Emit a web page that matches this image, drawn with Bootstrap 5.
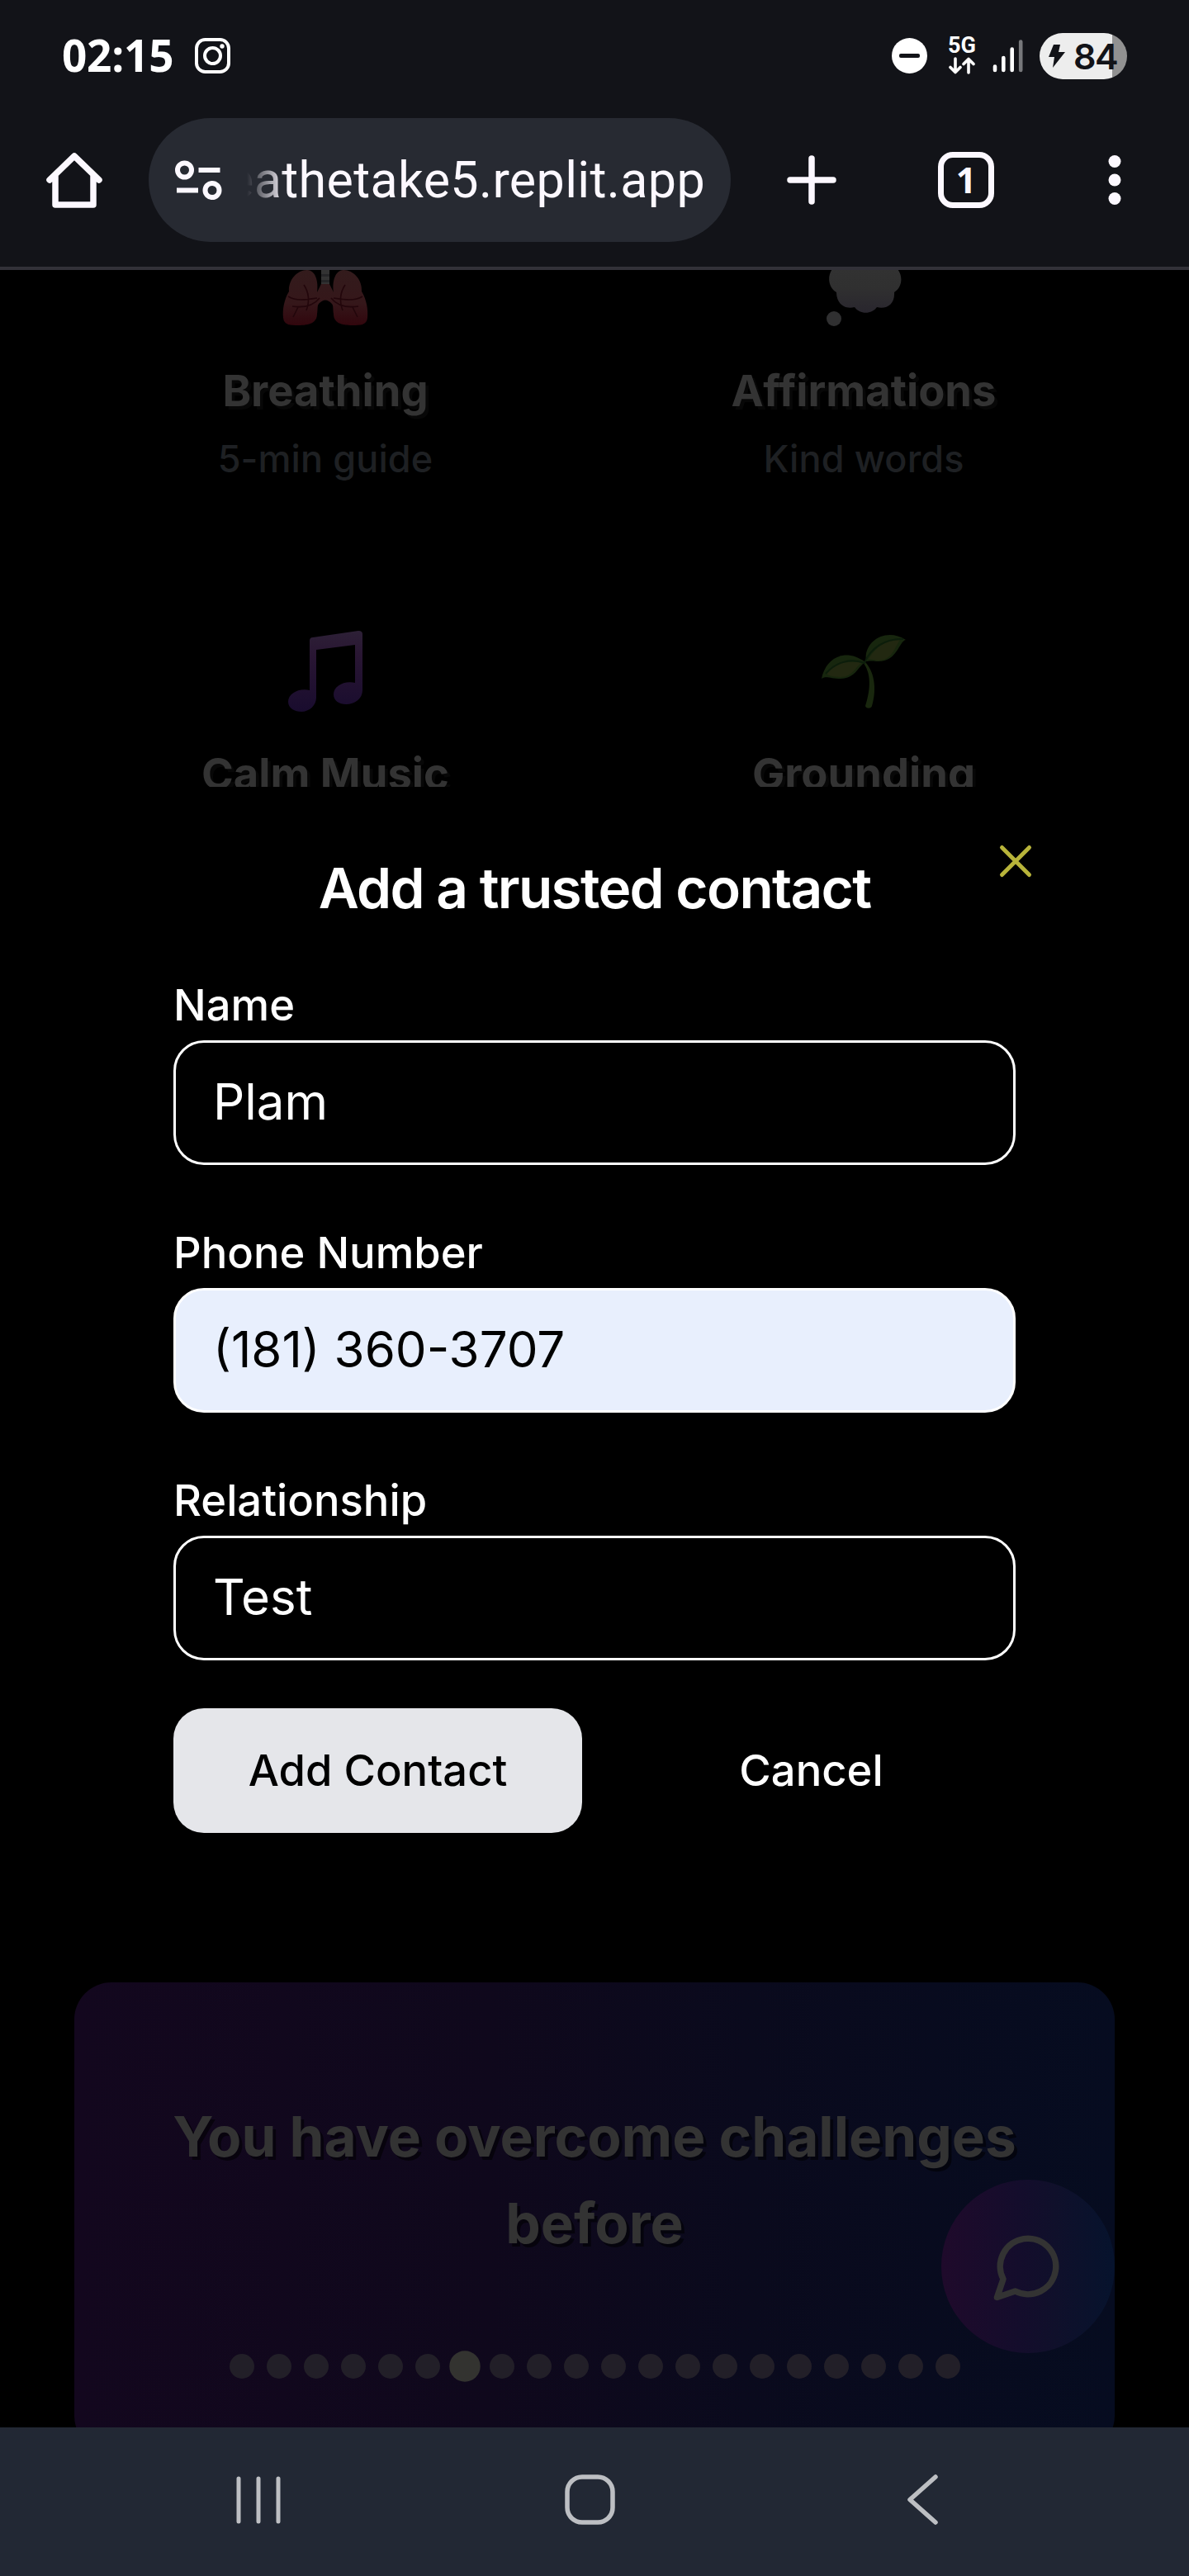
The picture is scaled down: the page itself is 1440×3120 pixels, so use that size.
<!DOCTYPE html>
<html lang="en">
<head>
<meta charset="utf-8">
<meta name="viewport" content="width=device-width, initial-scale=1">
<title>Add a trusted contact</title>
<link href="https://cdn.jsdelivr.net/npm/bootstrap@5.3.0/dist/css/bootstrap.min.css" rel="stylesheet">
<style>
  body { background: #000; color: #fff; font-family: Inter, "Liberation Sans", sans-serif; width: 1440px; height: 3120px; overflow: hidden; }
  svg { display: block; flex: none; }

  .status-bar { height: 135px; padding: 0 75px; background: #121318; font-family: "Open Sans", "Noto Sans", sans-serif; }
  .clock { font-size: 53px; font-weight: 700; line-height: 1; letter-spacing: -.2px; width: 161px; margin-top: -2px; }
  .net-type { width: 34px; margin-left: 25px; font: 700 27px/19px Roboto, sans-serif; }
  .signal { margin-left: 20px; }
  .batt { width: 106px; height: 56px; margin-left: 19px; padding-left: 11px; gap: 10px; border-radius: 28px; background: linear-gradient(90deg, #ededed 0 88px, #919191 88px); color: #121318; font: 600 43px/56px Inter, sans-serif; letter-spacing: -1.5px; }

  .toolbar { height: 192px; padding: 8px 0 0 56px; background: #121318; border-bottom: 4px solid #323138; }
  .home-key { margin-top: 41px; }
  .omnibox { width: 705px; height: 150px; margin-left: 56px; padding-left: 32px; border-radius: 75px; background: #272a32; }
  .omni-text { width: 555px; margin-left: 30px; overflow: hidden; color: #fcf8ff; font: 400 61px/90px Roboto, sans-serif; letter-spacing: .35px;
    -webkit-mask-image: linear-gradient(90deg, transparent 0, #000 48px); mask-image: linear-gradient(90deg, transparent 0, #000 48px); }
  .omni-text span { white-space: nowrap; }
  .plus-key { margin: 45px 0 0 68px; }
  .tab-count { width: 68px; height: 68px; margin: 41px 0 0 123px; border: 7.5px solid #fcf8ff; border-radius: 18px; color: #fcf8ff; font: 700 43px/53px "Open Sans", sans-serif; }
  .more-key { margin: 45px 0 0 138px; }

  .backdrop-tools { height: 626px; padding: 0 68px; overflow: hidden; }
  .tool-tile { height: 464px; }
  .tool-art { height: 72px; }
  .tool-name { margin-top: 37px; color: #333; font-size: 52.5px; font-weight: 700; line-height: 75px; text-shadow: 3.75px 3.75px 0 #070707; }
  .tool-hint { margin-top: 15px; color: #1e2023; font-size: 45px; font-weight: 500; line-height: 60px; letter-spacing: .1px; }

  .dialog-pane { height: 1448px; padding: 75px 210px 0; background: #000; }
  .dialog-title { margin: -1px 0 70px; padding-top: 15px; font-size: 67.5px; font-weight: 600; line-height: 68px; letter-spacing: -1.69px; }
  .close-x { top: 60px; right: 180px; }
  .field-row { margin-bottom: 69px; }
  .field-row-last { margin-bottom: 58px; }
  .field-label { font-size: 52.5px; font-weight: 500; line-height: 75px; display: block; margin: 0 0 5px; }
  .form-control.field-box { height: 151px; padding: 0 45px 3px; border: 3px solid #fff; border-radius: 37px; background: #000; color: #fff; font-size: 60px; line-height: 90px; }
  .form-control.field-filled { background: #e8effd; color: #000; }
  .dialog-actions { gap: 30px; }
  .btn.dialog-btn { height: 151px; border: 0; border-radius: 37px; font-size: 52.5px; font-weight: 500; color: #fff; }
  .btn.dialog-main { background: #e5e6ea; color: #000; }

  .lower { height: 539px; padding: 0 90px; overflow: hidden; }
  .quote-card { height: 570px; padding-top: 134px; border-radius: 45px; background: linear-gradient(90deg, #13071e 0%, #0f081c 40%, #0a0a1d 65%, #060c20 100%); }
  .quote-text { color: #333; font-size: 67.5px; font-weight: 700; line-height: 105px; text-shadow: 3.75px 3.75px 0 rgba(0,0,0,.55); }
  .pips { gap: 15px; margin: 106px 0 0; padding-left: 188px; }
  .pip { width: 30px; height: 30px; border-radius: 50%; background: #221f28; }
  .pip-on { background: #333330; transform: scale(1.25); }
  .fab { top: 239px; right: 90px; width: 210px; height: 210px; border-radius: 50%; background: linear-gradient(90deg, #1f0a2b, #140d2c 45%, #10102b 65%, #06132d); }

  .nav-keys { height: 180px; padding: 0 0 5px 285px; background: #222834; }
  .key-home { margin-left: 343px; }
  .key-back { margin-left: 352px; }
</style>
</head>
<body>
<header>
  <div class="status-bar d-flex align-items-center">
    <div class="clock">02:15</div>
    <svg width="43" height="43" viewBox="0 0 43 43" fill="none" stroke="#fff" stroke-width="4"><rect x="2" y="2" width="39" height="39" rx="10.5"/><circle cx="21.500" cy="21.500" r="9.500"/><circle cx="33" cy="10" r="2.700" fill="#fff" stroke="none"/></svg>
    <div class="ms-auto d-flex align-items-center">
      <svg width="43" height="43" viewBox="0 0 43 43"><circle cx="21.500" cy="21.500" r="21.500" fill="#fff"/><rect x="9" y="19" width="25" height="5" rx="2" fill="#121318"/></svg>
      <div class="net-type text-center">
        5G
        <svg width="34" height="21" viewBox="0 0 34 21" fill="none" stroke="#fff" stroke-width="3.600" stroke-linecap="round" stroke-linejoin="round" class="mt-1"><path d="M9 2v16M3 12.500l6 6 6-6M25 19V3M19 8.500l6-6 6 6"/></svg>
      </div>
      <svg class="signal" width="38" height="41" viewBox="0 0 38 41" stroke-width="4.600" stroke-linecap="round" fill="none"><path stroke="#fff" d="M3 33.500v4.500M13.300 23v15M23.700 12.500v25.500"/><path stroke="#77787b" d="M34.200 3.500v34.500"/></svg>
      <div class="batt d-flex align-items-center">
        <svg width="20" height="28" viewBox="0 0 20 28"><path fill="#121318" d="M6 0h8l-2 9h8L5 28l2-13H0z"/></svg>
        <span>84</span>
      </div>
    </div>
  </div>
  <div class="toolbar d-flex">
    <svg class="home-key" width="68" height="68" viewBox="0 0 68 68" fill="none" stroke="#fcf8ff" stroke-width="7.500" stroke-linecap="round" stroke-linejoin="round"><path d="M4 34 34 5l30 29M11 28v36h46V28"/></svg>
    <div class="omnibox d-flex align-items-center">
      <svg width="57" height="49" viewBox="0 0 57 49" fill="none" stroke="#fcf8ff" stroke-width="6"><circle cx="11.500" cy="12" r="8.500"/><path d="M28.500 12h26M2 36.500h26"/><circle cx="45" cy="36.500" r="8.500"/></svg>
      <div class="omni-text d-flex justify-content-end"><span>eathetake5.replit.app</span></div>
    </div>
    <svg class="plus-key" width="60" height="60" viewBox="0 0 60 60" stroke="#fcf8ff" stroke-width="7.500" stroke-linecap="round"><path d="M30 4v52M4 30h52"/></svg>
    <div class="tab-count text-center">1</div>
    <svg class="more-key" width="16" height="60" viewBox="0 0 16 60" fill="#fcf8ff"><circle cx="8" cy="7.500" r="7.500"/><circle cx="8" cy="30" r="7.500"/><circle cx="8" cy="52.500" r="7.500"/></svg>
  </div>
</header>

<section class="backdrop-tools">
  <div class="row g-0 text-center">
    <div class="col-6 tool-tile">
      <div class="tool-art d-flex justify-content-center">
        <svg width="104" height="72" viewBox="0 0 104 72">
          <defs><linearGradient id="lung" x1="0" y1="0" x2="0" y2="1"><stop offset="0" stop-color="#331b1c"/><stop offset=".6" stop-color="#35171a"/><stop offset="1" stop-color="#31060d"/></linearGradient></defs>
          <path fill="url(#lung)" d="M30 0C18 0 7 12 8 26 2 36 0 48 1 58c1 9 9 9 18 9 14 0 23-3 23-14 1-5 0-10 2-12q8-9 16 0c2 2 1 7 2 12 0 11 9 14 23 14 9 0 17 0 18-9 1-10-1-22-7-32C97 12 86 0 74 0 64 0 60 14 62 27L57 17H47L42 27C44 14 40 0 30 0z"/>
          <path fill="#333" d="M47-4h10v21H47z"/><path fill="#252527" d="M47 5h10v3H47zM47 12h10v3H47z"/>
          <path fill="none" stroke="#22060b" stroke-width="1.600" d="M7 32c9 6 22 4 35 2M97 32c-9 6-22 4-35 2M45 34C38 43 26 46 12 44M26 18c6 9 7 20 3 31M59 34c7 9 19 12 33 10M76 18c-6 9-7 20-3 31M19 45l-6 12M85 45l6 12"/>
        </svg>
      </div>
      <div class="tool-name">Breathing</div>
      <div class="tool-hint">5-min guide</div>
    </div>
    <div class="col-6 tool-tile">
      <div class="tool-art d-flex justify-content-center">
        <svg width="92" height="72" viewBox="0 0 92 72">
          <defs><linearGradient id="puff" x1="0" y1="0" x2="0" y2="1"><stop offset="0" stop-color="#323232"/><stop offset=".45" stop-color="#303030"/><stop offset="1" stop-color="#29262e"/></linearGradient></defs>
          <path fill="url(#puff)" d="M10-4C0 8 4 22 13 27c0 14 10 21 22 18 6 9 21 9 27 0 12 3 22-4 21-18C94 20 94 4 84-4z"/>
          <ellipse cx="10" cy="59" rx="9" ry="9" fill="#303031"/>
        </svg>
      </div>
      <div class="tool-name">Affirmations</div>
      <div class="tool-hint">Kind words</div>
    </div>
    <div class="col-6 tool-tile">
      <div class="tool-art d-flex justify-content-center align-items-end">
        <svg width="92" height="101" viewBox="0 0 92 101">
          <defs><linearGradient id="tune" x1="0" y1="0" x2="0" y2="1"><stop offset="0" stop-color="#2d2036"/><stop offset=".3" stop-color="#291633"/><stop offset="1" stop-color="#190c2e"/></linearGradient></defs>
          <path fill="url(#tune)" d="M31 10q-4 0-4 4v60C14 71 1 78 1 88c0 8 8 12 16 12 10 0 18-8 18-17V25l47-6v46C69 62 56 69 56 79c0 8 7 12 15 12 11 0 20-7 20-17V6q0-4-5-4z"/>
        </svg>
      </div>
      <div class="tool-name">Calm Music</div>
    </div>
    <div class="col-6 tool-tile">
      <div class="tool-art d-flex justify-content-center align-items-end">
        <svg width="104" height="96" viewBox="0 0 104 96">
          <path fill="#19270e" d="M51 35c10 13 10 31 3 53 0 3 7 4 8 0 5-16 5-39-8-53z"/>
          <path fill="#17260e" d="M1 55C6 30 29 17 54 35 45 40 42 55 24 55 12 55 6 51 1 55zM55 34C51 10 79-8 103 8 94 10 93 36 67 34c-7-1-10 0-12 0z"/>
          <path fill="#222811" d="M7 49C18 35 34 33 50 36 42 40 39 53 24 53 12 53 8 50 7 49zM58 31C67 15 81 8 96 8c-6 8-9 25-27 25z"/>
          <path fill="none" stroke="#0c1d0b" stroke-width="2" d="M6 49C19 34 37 30 53 36 60 18 78 6 100 7"/>
        </svg>
      </div>
      <div class="tool-name">Grounding</div>
    </div>
  </div>
</section>

<main class="dialog-pane position-relative">
  <svg class="close-x position-absolute" width="60" height="60" viewBox="0 0 60 60" stroke="#b8b43a" stroke-width="5" stroke-linecap="round"><path d="M13.500 13.500l33 33M46.500 13.500l-33 33"/></svg>
  <h2 class="dialog-title text-center">Add a trusted contact</h2>
  <form>
    <div class="field-row"><label class="field-label" for="n">Name</label><input id="n" class="form-control field-box" value="Plam"></div>
    <div class="field-row"><label class="field-label" for="p">Phone Number</label><input id="p" class="form-control field-box field-filled" value="(181) 360-3707"></div>
    <div class="field-row-last"><label class="field-label" for="r">Relationship</label><input id="r" class="form-control field-box" value="Test"></div>
    <div class="dialog-actions d-flex">
      <button type="button" class="btn dialog-btn dialog-main flex-fill w-50">Add Contact</button>
      <button type="button" class="btn dialog-btn flex-fill w-50">Cancel</button>
    </div>
  </form>
</main>

<section class="lower position-relative">
  <div class="quote-card">
    <p class="quote-text text-center mb-0">You have overcome challenges<br>before</p>
    <div class="pips d-flex">
      <i class="pip"></i><i class="pip"></i><i class="pip"></i><i class="pip"></i><i class="pip"></i><i class="pip"></i><i class="pip pip-on"></i><i class="pip"></i><i class="pip"></i><i class="pip"></i><i class="pip"></i><i class="pip"></i><i class="pip"></i><i class="pip"></i><i class="pip"></i><i class="pip"></i><i class="pip"></i><i class="pip"></i><i class="pip"></i><i class="pip"></i>
    </div>
  </div>
  <div class="fab position-absolute d-flex align-items-center justify-content-center">
    <svg width="90" height="90" viewBox="0 0 24 24" fill="none" stroke="#333" stroke-width="2" stroke-linecap="round" stroke-linejoin="round"><path d="M7.900 20A9 9 0 1 0 4 16.100L2 22Z"/></svg>
  </div>
</section>

<footer class="nav-keys d-flex align-items-center">
  <svg width="56" height="58" viewBox="0 0 56 58" stroke="#bdbfc3" stroke-width="5" stroke-linecap="round"><path d="M4 3v52M28 3v52M52 3v52"/></svg>
  <svg class="key-home" width="61" height="61" viewBox="0 0 61 61" fill="none" stroke="#bdbfc3" stroke-width="5.500"><rect x="3" y="3" width="55" height="55" rx="18"/></svg>
  <svg class="key-back" width="40" height="61" viewBox="0 0 40 61" fill="none" stroke="#bdbfc3" stroke-width="5.500" stroke-linecap="round" stroke-linejoin="round"><path d="M36 3 5 30.500 36 58"/></svg>
</footer>
<script src="https://cdn.jsdelivr.net/npm/bootstrap@5.3.0/dist/js/bootstrap.bundle.min.js"></script>
</body>
</html>
